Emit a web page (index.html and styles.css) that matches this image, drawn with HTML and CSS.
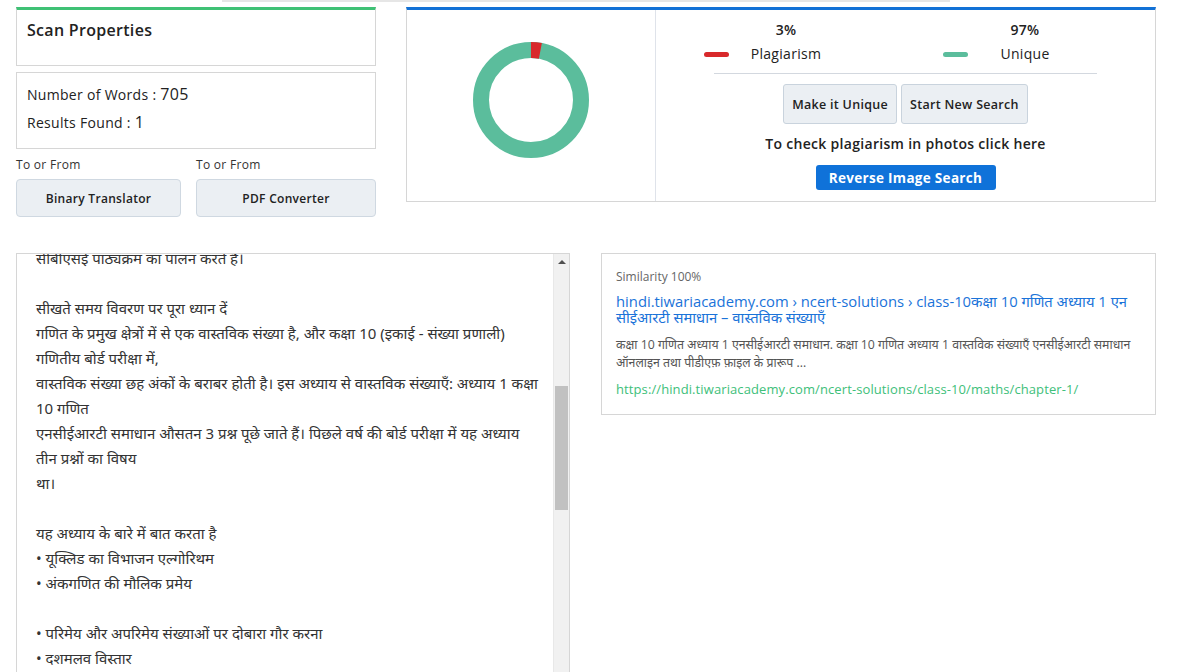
FILE: index.html
```html
<!DOCTYPE html>
<html>
<head>
    <title>Plagiarism Checker - Result</title>
    <link rel="stylesheet" href="styles.css">
</head>
<body>
    <div class="top-rule"></div>

    <div class="summary-row">
        <!-- 左侧扫描属性 -->
        <div class="scan-column">
            <div class="panel scan-head">
                <div class="scan-title">Scan Properties</div>
            </div>
            <div class="panel scan-stats">
                <div class="stat-line">Number of Words : <span class="stat-num">705</span></div>
                <div class="stat-line">Results Found : <span class="stat-num">1</span></div>
            </div>
            <div class="tool-links">
                <div class="tool-item">
                    <div class="tool-label">To or From</div>
                    <div class="tool-btn">Binary Translator</div>
                </div>
                <div class="tool-item">
                    <div class="tool-label">To or From</div>
                    <div class="tool-btn">PDF Converter</div>
                </div>
            </div>
        </div>

        <!-- 右侧结果卡片 -->
        <div class="panel result-panel">
            <div class="chart-pane">
                <svg class="donut" width="116" height="116" viewBox="0 0 116 116">
                    <circle cx="58" cy="58" r="50" fill="none" stroke="#5bbd9c" stroke-width="16"/>
                    <circle cx="58" cy="58" r="50" fill="none" stroke="#d8292b" stroke-width="16"
                        stroke-dasharray="9.42 304.74" transform="rotate(-90 58 58)"/>
                </svg>
            </div>
            <div class="info-pane">
                <div class="legend">
                    <div class="legend-col">
                        <div class="legend-pct">3%</div>
                        <div class="legend-row">
                            <span class="legend-dash dash-red"></span>
                            <span class="legend-name">Plagiarism</span>
                        </div>
                    </div>
                    <div class="legend-col">
                        <div class="legend-pct">97%</div>
                        <div class="legend-row">
                            <span class="legend-dash dash-green"></span>
                            <span class="legend-name">Unique</span>
                        </div>
                    </div>
                </div>
                <div class="legend-rule"></div>
                <div class="action-btns">
                    <div class="action-btn">Make it Unique</div>
                    <div class="action-btn">Start New Search</div>
                </div>
                <div class="photo-hint">To check plagiarism in photos click here</div>
                <div class="reverse-btn">Reverse Image Search</div>
            </div>
        </div>
    </div>

    <div class="detail-row">
        <!-- 原文文本框 -->
        <div class="text-box">
            <div class="text-view">
                <div class="text-body">
                    <div class="tl">सीबीएसई पाठ्यक्रम का पालन करते हैं।</div>
                    <div class="tl">&nbsp;</div>
                    <div class="tl">सीखते समय विवरण पर पूरा ध्यान दें</div>
                    <div class="tl">गणित के प्रमुख क्षेत्रों में से एक वास्तविक संख्या है, और कक्षा 10 (इकाई - संख्या प्रणाली)</div>
                    <div class="tl">गणितीय बोर्ड परीक्षा में,</div>
                    <div class="tl">वास्तविक संख्या छह अंकों के बराबर होती है। इस अध्याय से वास्तविक संख्याएँ: अध्याय 1 कक्षा</div>
                    <div class="tl">10 गणित</div>
                    <div class="tl">एनसीईआरटी समाधान औसतन 3 प्रश्न पूछे जाते हैं। पिछले वर्ष की बोर्ड परीक्षा में यह अध्याय</div>
                    <div class="tl">तीन प्रश्नों का विषय</div>
                    <div class="tl">था।</div>
                    <div class="tl">&nbsp;</div>
                    <div class="tl">यह अध्याय के बारे में बात करता है</div>
                    <div class="tl">• यूक्लिड का विभाजन एल्गोरिथम</div>
                    <div class="tl">• अंकगणित की मौलिक प्रमेय</div>
                    <div class="tl">&nbsp;</div>
                    <div class="tl">• परिमेय और अपरिमेय संख्याओं पर दोबारा गौर करना</div>
                    <div class="tl">• दशमलव विस्तार</div>
                </div>
            </div>
            <div class="fake-scrollbar">
                <div class="scroll-arrow"></div>
                <div class="scroll-thumb"></div>
            </div>
        </div>

        <!-- 匹配来源 -->
        <div class="source-card">
            <div class="similarity">Similarity 100%</div>
            <div class="source-title">hindi.tiwariacademy.com › ncert-solutions › class-10कक्षा 10 गणित अध्याय 1 एन<br>सीईआरटी समाधान – वास्तविक संख्याएँ</div>
            <div class="source-desc">कक्षा 10 गणित अध्याय 1 एनसीईआरटी समाधान. कक्षा 10 गणित अध्याय 1 वास्तविक संख्याएँ एनसीईआरटी समाधान<br>ऑनलाइन तथा पीडीएफ़ फ़ाइल के प्रारूप ...</div>
            <div class="source-url">https://hindi.tiwariacademy.com/ncert-solutions/class-10/maths/chapter-1/</div>
        </div>
    </div>
</body>
</html>
```

FILE: styles.css
```css
body {
    font-family: 'Open Sans', 'Noto Sans', sans-serif;
    margin: 0;
    padding: 0;
    background: #fff;
    color: #222;
    overflow: hidden;
}
.top-rule {
    margin-left: 222px;
    width: 728px;
    height: 2px;
    background: #e6e6e6;
}
.summary-row {
    display: flex;
    gap: 30px;
    margin: 5px 0 0 16px;
    align-items: flex-start;
}
.panel {
    border: 1px solid #d6d6d6;
    background: #fff;
}
.scan-column {
    width: 360px;
    display: flex;
    flex-direction: column;
    letter-spacing: 0.3px;
}
.scan-head {
    border-top: 3px solid #3fc175;
    height: 55px;
    padding: 0 10px;
}
.scan-title {
    font-size: 16px;
    font-weight: 600;
    margin-top: 9px;
}
.scan-stats {
    margin-top: 6px;
    height: 75px;
    padding: 0 10px;
}
.stat-line {
    font-size: 14px;
    height: 28px;
    line-height: 28px;
}
.stat-line:first-child {
    margin-top: 7px;
}
.stat-num {
    font-size: 16px;
    font-weight: 500;
}
.tool-links {
    display: flex;
    gap: 15px;
    margin-top: 8px;
}
.tool-item {
    display: flex;
    flex-direction: column;
}
.tool-item:first-child {
    width: 165px;
}
.tool-item:last-child {
    flex: 1;
}
.tool-label {
    font-size: 12px;
    color: #333;
    line-height: 16px;
}
.tool-btn {
    margin-top: 6px;
    height: 36px;
    background: #ebeff3;
    border: 1px solid #cfd8e1;
    border-radius: 4px;
    display: flex;
    align-items: center;
    justify-content: center;
    font-size: 12px;
    font-weight: 600;
    color: #222;
}
.result-panel {
    width: 748px;
    height: 191px;
    border-top: 3px solid #1271d6;
    display: flex;
}
.chart-pane {
    width: 248px;
    border-right: 1px solid #dfe3ea;
    display: flex;
    justify-content: center;
    padding-top: 32px;
}
.info-pane {
    flex: 1;
    display: flex;
    flex-direction: column;
    align-items: center;
    letter-spacing: 0.3px;
}
.legend {
    display: flex;
    width: 478px;
    margin-top: 9px;
}
.legend-col {
    flex: 1;
    display: flex;
    flex-direction: column;
}
.legend-pct {
    text-align: center;
    font-size: 14px;
    font-weight: 600;
    line-height: 22px;
}
.legend-row {
    display: grid;
    grid-template-columns: 62px 1fr 62px;
    align-items: center;
    line-height: 26px;
}
.legend-dash {
    justify-self: end;
    width: 25px;
    height: 5px;
    border-radius: 3px;
}
.dash-red { background: #d8292b; }
.dash-green { background: #5bbd9c; }
.legend-name {
    text-align: center;
    font-size: 14px;
    font-weight: 500;
}
.legend-rule {
    width: 383px;
    height: 1px;
    background: #d3d8df;
    margin-top: 6px;
}
.action-btns {
    display: flex;
    gap: 4px;
    margin-top: 10px;
}
.action-btn {
    height: 38px;
    padding: 0 8px;
    background: #ebeff3;
    border: 1px solid #c9d3dd;
    border-radius: 3px;
    display: flex;
    align-items: center;
    font-size: 12.5px;
    font-weight: 600;
    color: #222;
}
.photo-hint {
    margin-top: 10px;
    font-size: 14px;
    font-weight: 600;
    line-height: 20px;
}
.reverse-btn {
    margin-top: 11px;
    height: 25px;
    width: 180px;
    background: #0f72d9;
    color: #fff;
    border-radius: 3px;
    display: flex;
    align-items: center;
    justify-content: center;
    font-size: 13.5px;
    font-weight: 700;
}
.detail-row {
    display: flex;
    gap: 31px;
    margin: 36px 0 0 16px;
    align-items: flex-start;
}
.text-box {
    width: 552px;
    height: 440px;
    border: 1px solid #d6d6d6;
    display: flex;
}
.text-view {
    flex: 1;
    overflow: hidden;
}
.text-body {
    margin-top: -8px;
    padding-left: 19px;
    font-family: 'Noto Sans', 'Liberation Sans', sans-serif;
    font-size: 15px;
    color: #333;
}
.tl {
    line-height: 25px;
    white-space: nowrap;
}
.fake-scrollbar {
    width: 15px;
    background: #f1f1f1;
    border-left: 1px solid #e8e8e8;
    display: flex;
    flex-direction: column;
    align-items: center;
}
.scroll-arrow {
    margin-top: 6px;
    width: 0;
    height: 0;
    border-left: 4px solid transparent;
    border-right: 4px solid transparent;
    border-bottom: 4px solid #505050;
}
.scroll-thumb {
    margin-top: 122px;
    width: 13px;
    height: 124px;
    background: #c1c1c1;
}
.source-card {
    width: 539px;
    height: 150px;
    border: 1px solid #d6d6d6;
    padding: 10px 0 0 14px;
}
.similarity {
    font-size: 12px;
    color: #666;
    line-height: 26px;
}
.source-title {
    margin-top: 3px;
    font-size: 14.8px;
    color: #1a73d9;
    line-height: 16px;
}
.source-desc {
    margin-top: 11px;
    font-size: 12.3px;
    color: #555;
    line-height: 18px;
}
.source-url {
    margin-top: 8px;
    font-size: 13px;
    letter-spacing: 0.1px;
    color: #40c07a;
    line-height: 18px;
}
```
